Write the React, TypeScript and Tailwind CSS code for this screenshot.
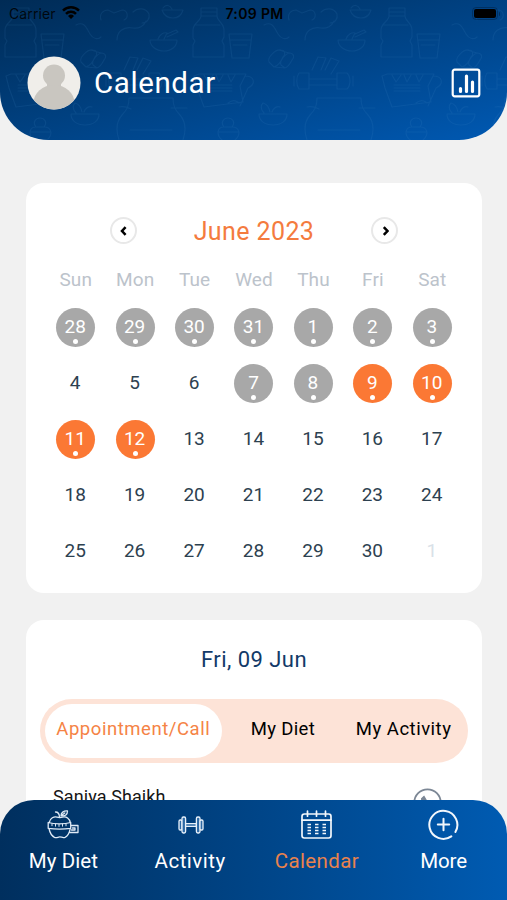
import React from "react";
import clsx from "clsx";

const weekdays = ["Sun", "Mon", "Tue", "Wed", "Thu", "Fri", "Sat"];

type Kind = "past" | "active" | "plain" | "outside";
type Day = { label: number; kind: Kind };

const days: Day[] = [
  ...[28, 29, 30, 31, 1, 2, 3].map((label): Day => ({ label, kind: "past" })),
  ...[4, 5, 6].map((label): Day => ({ label, kind: "plain" })),
  ...[7, 8].map((label): Day => ({ label, kind: "past" })),
  ...[9, 10, 11, 12].map((label): Day => ({ label, kind: "active" })),
  ...Array.from({ length: 18 }, (_, i): Day => ({ label: i + 13, kind: "plain" })),
  { label: 1, kind: "outside" },
];

function FoodPattern() {
  return (
    <svg className="absolute inset-0" width="507" height="140" fill="none" stroke="#4d93cf" strokeOpacity="0.12" strokeWidth="1.2" strokeLinejoin="round" strokeLinecap="round">
      <defs>
        <g id="food-tile">
          <path d="M13 8h16v8H13zM14 12h14M13 16c0 5-8 7-8 14v8l2 3-2 4v12h31V45l-2-4 2-4v-7c0-7-7-9-7-14M8 25h24" />
          <path d="M41 34h23l-3 24H44zM42 40h21M45 45h14" />
          <path d="M150 40h27c0 6-5 11-13 11s-14-5-14-11zM158 39c2-5 6-7 9-6l-3 6M167 34l9-4 2 2-11 5" />
          <path d="M163 8c3-4 7-3 9 1M162 10h21c-2 7-6 8-10 8s-9-2-11-8" />
          <path d="M81 62c-2-4 6-13 12-12 4 0 5 4 2 7-2 5-6 9-9 10zM93 65c-2-4 5-12 9-12 5 1 4 5 2 7-2 4-4 7-7 8zM91 50l10 3M86 67l11 1" />
          <path d="M124 70l6-13 8 1-5 12M137 70l6-12 8 3-8 13" />
          <path d="M111 73h10v16h-10c-3-4-3-12 0-16zM121 79h28v6h-28M149 73h10c4 4 4 12 0 16h-10zM106 76v10M165 76v10" />
          <path d="M6 76l5-2h47l-6 12 3 16-39 5-7-19zM16 75l4 7 5-7M28 75l3 7 4-7M40 75l3 7 4-7M18 85h26M18 88h26M18 91h26M57 76c10 0 11 8 3 12l-8 18M40 103c5-4 9-2 11 0" />
          <path d="M71 114h28c0 7-6 11-14 11s-14-4-14-11zM76 113c-4-4-3-8-1-10 4 1 6 4 7 9M84 112c1-4 5-6 8-5" />
          <path d="M129 98h44c0 8 2 12 7 17 6 7 6 16 3 25M129 98c0 8-2 12-7 17-6 7-6 16-3 25M119 107c4-1 8 0 12 2M171 108h16M130 130h42" />
          <path d="M34 140c-6-5-5-13 2-13-4-5 0-9 4-9s8 4 4 9c8 0 9 8 3 13M37 127h8M31 132h20" />
          <path d="M101 20c-2-6 2-10 7-10l6 3 8-3c6 0 7 8 2 10M133 12c5-5 13-4 16 2 1 5-2 9-7 9M76 25c8-4 10 2 14 9 3 5 8 6 11 3M117 40c0-8 6-14 16-12 6 1 11-2 13-7" />
        </g>
      </defs>
      <use href="#food-tile" />
      <use href="#food-tile" x="188" />
      <use href="#food-tile" x="376" />
    </svg>
  );
}

function WifiIcon() {
  return (
    <svg className="ml-[6px] -mt-[2px]" width="18" height="13" viewBox="0 0 18 13" fill="none" stroke="#000" strokeWidth="2.5">
      <path d="M1 4.6a11.4 11.4 0 0 1 16 0" />
      <path d="M4 7.9a7 7 0 0 1 10 0" />
      <path d="M9 13 6 9.9a4.3 4.3 0 0 1 6 0z" fill="#000" stroke="none" />
    </svg>
  );
}

function Header() {
  return (
    <header className="relative h-[140px] overflow-hidden rounded-b-[48px] bg-linear-to-br from-[#002b55] to-[#0059b3]">
      <FoodPattern />
      <div className="relative grid h-7 grid-cols-3 items-center pb-px pl-[9px] pr-[7px] font-['Inter'] text-[14px] text-black">
        <div className="flex items-center tracking-[0.1px] text-black/85">
          Carrier
          <WifiIcon />
        </div>
        <div className="text-center text-[14px] font-semibold tracking-[0.35px]">7:09 PM</div>
        <div className="flex items-center justify-end">
          <span className="flex h-[13px] w-[26px] items-center justify-center rounded-[4px] border border-black/25">
            <span className="h-[9px] w-[22px] rounded-[2px] bg-black" />
          </span>
          <span className="ml-px h-1 w-[1.5px] rounded-r bg-black/30" />
        </div>
      </div>
      <div className="relative mt-[28px] flex items-center pl-[27px] pr-[26px]">
        <svg width="54" height="54" viewBox="0 0 54 54">
          <clipPath id="avatar">
            <circle cx="27" cy="27" r="26.5" />
          </clipPath>
          <circle cx="27" cy="27" r="26.5" fill="#f0eeea" />
          <g clipPath="url(#avatar)" fill="#c9c6c0">
            <circle cx="27" cy="19.5" r="11" />
            <path d="M20 26h14v8H20z" />
            <ellipse cx="27" cy="47" rx="20.5" ry="18" />
          </g>
        </svg>
        <h1 className="ml-[13px] text-[29.5px] leading-[54px] tracking-[0.6px] text-white">Calendar</h1>
        <svg className="ml-auto" width="30" height="30" viewBox="0 0 30 30" fill="none" stroke="#fff" strokeLinecap="round">
          <rect x="1.7" y="1.7" width="26.6" height="26.6" rx="2" strokeWidth="2.2" />
          <path d="M9.5 20.5v3M15.5 8v15.5M21.5 14v9.5" strokeWidth="3.2" />
        </svg>
      </div>
    </header>
  );
}

function Arrow({ direction }: { direction: "left" | "right" }) {
  return (
    <button className="flex size-[27px] items-center justify-center rounded-full border-2 border-[#e8e8e8] bg-white">
      <svg width="8" height="10" viewBox="0 0 8 10" fill="none" stroke="#000" strokeWidth="2.5">
        <path d={direction === "left" ? "M5.6 1.2 2 5 5.6 8.8" : "M2.8 1.2 6.4 5 2.8 8.8"} />
      </svg>
    </button>
  );
}

function DayCell({ label, kind }: Day) {
  const marked = kind === "past" || kind === "active";
  return (
    <div className="flex h-14 items-center justify-center">
      <div
        className={clsx(
          "relative flex size-[39px] items-center justify-center rounded-full pr-[1px] pb-[2px] text-[19px] leading-none",
          kind === "past" && "bg-[#a8a8a8] text-white",
          kind === "active" && "bg-[#fb7834] text-white",
          kind === "plain" && "text-[#2d4150]",
          kind === "outside" && "text-[#d9e1e8]",
        )}
      >
        {label}
        {marked && <span className="absolute bottom-[3px] left-[17px] size-[5px] rounded-full bg-white" />}
      </div>
    </div>
  );
}

function CalendarCard() {
  return (
    <section className="mt-[43px] h-[410px] rounded-[18px] bg-white px-5 pt-[34px]">
      <div className="flex items-center justify-between pl-[64px] pr-[64px]">
        <Arrow direction="left" />
        <h2 className="pt-[2px] text-[25px] leading-[25px] tracking-[0.4px] text-[#f47b3e]">June 2023</h2>
        <Arrow direction="right" />
      </div>
      <div className="mt-[24px] grid grid-cols-7 text-center text-[19px] leading-6 tracking-[0.1px] text-[#bcc3cb]">
        {weekdays.map((d) => (
          <span key={d}>{d}</span>
        ))}
      </div>
      <div className="mt-[7px] grid grid-cols-7">
        {days.map((d, i) => (
          <DayCell key={i} {...d} />
        ))}
      </div>
    </section>
  );
}

function AppointmentCard() {
  return (
    <section className="mt-[27px] h-[300px] rounded-t-[18px] bg-white px-[14px] pt-[27px]">
      <h3 className="text-center text-[22px] leading-[26px] tracking-[0.45px] text-[#123a68]">Fri, 09 Jun</h3>
      <div className="mt-[26px] flex h-16 items-center rounded-full bg-[#fde3d7] px-[5px] text-[18.5px] whitespace-nowrap text-black">
        <div className="flex h-[54px] w-[177px] items-center justify-center rounded-full bg-white pb-[3px] tracking-[0.55px] text-[#f58345]">Appointment/Call</div>
        <div className="w-[123px] pb-[3px] text-center tracking-[0.35px]">My Diet</div>
        <div className="w-[119px] pb-[3px] text-center tracking-[0.5px]">My Activity</div>
      </div>
      <div className="mt-[22px] flex justify-between pl-[13px] pr-[26px]">
        <span className="text-[18px] leading-6 tracking-[0.1px] text-[#161616]">Saniya Shaikh</span>
        <svg className="mt-[3px]" width="29" height="29" viewBox="0 0 29 29" fill="none" stroke="#7c8795" strokeWidth="1.8">
          <circle cx="14.5" cy="14.5" r="13.2" />
          <path d="M11 8.5 8.6 10.8c0 5.300 4 9.200 8.900 9.200l2.500-2.500-4-2.500-1.500 1.500-3-3 1.500-1.500z" fill="#7c8795" strokeWidth="1.300" />
        </svg>
      </div>
    </section>
  );
}

function AppleIcon() {
  return (
    <svg width="32" height="30" viewBox="0 0 32 30" fill="none" stroke="#dfeaf6" strokeWidth="1.3" strokeLinejoin="round" strokeLinecap="round">
      <path d="M2.2 12.5C3.2 8 7 6.3 10 7.1c2 .6 3.5.6 5.5 0 4-.9 7 1.6 7.8 5.4M2 18.5c.8 4 3 7.5 5.5 8.8 2 .9 3.5-.4 5.2-.4s3.3 1.3 5.3.4c2.5-1.2 4.3-4.5 5.1-8" />
      <path d="M1.2 12.5c6 1.800 16.500 1.800 22.500 0v5.800c-6 .8-16.500 .8-22.500 0zM23.700 15.500H31v7h-8.500M25.500 18h2.500v2h-3.500" />
      <path d="M5 13.700v2M8.500 14.200v2M12 14.400v2M15.500 14.200v2M19 13.800v2" strokeWidth="1" />
      <path d="M12.5 7.2C12.4 4 11 2 8.5 2M14 5.7c0-3 2.5-5 6.5-4.7 0 3.5-2.3 5.500-6.500 4.700zM14 5.700l3.800-2.800" />
    </svg>
  );
}

function DumbbellIcon() {
  return (
    <svg className="ml-[2px]" width="26" height="18" viewBox="0 0 26 18" fill="#2d69a5" stroke="#e8f1fa" strokeWidth="1.3">
      <rect x="1" y="4" width="3" height="10" rx="1.2" />
      <rect x="4" y="1" width="3.6" height="16" rx="1.4" />
      <path d="M7.6 7.6h10.8v2.8H7.6z" />
      <rect x="18.4" y="1" width="3.6" height="16" rx="1.4" />
      <rect x="22" y="4" width="3" height="10" rx="1.2" />
    </svg>
  );
}

function CalendarIcon() {
  return (
    <svg width="31" height="29" viewBox="0 0 31 29" fill="none" stroke="#f2f7fc" strokeWidth="1.7" strokeLinecap="round">
      <rect x="1" y="4" width="29" height="24" rx="2.4" />
      <path d="M1 10.2h29M6.5 1.2v5M15.5 1.2v5M24.5 1.2v5" />
      <path d="M6.500 14.500h3.500M14 14.500h3.500M21.500 14.500h3.500M6.500 17.500h3.500M14 17.500h3.500M21.500 17.500h3.500M6.500 20.500h3.500M14 20.500h3.500M21.500 20.500h3.500M6.500 23.500h3.500M14 23.500h3.500M21.500 23.500h3.500" strokeLinecap="butt" />
    </svg>
  );
}

function MoreIcon() {
  return (
    <svg width="31" height="31" viewBox="0 0 31 31" fill="none" stroke="#f2f7fc" strokeWidth="2" strokeLinecap="round">
      <path d="M23.3 27.4A14 14 0 1 1 27.4 23M15.5 9.8v11.4M9.8 15.5h11.4" />
    </svg>
  );
}

const tabs = [
  { label: "My Diet", icon: <AppleIcon />, text: "tracking-[0.1px] text-white" },
  { label: "Activity", icon: <DumbbellIcon />, text: "tracking-[0.5px] text-white" },
  { label: "Calendar", icon: <CalendarIcon />, text: "tracking-[0.35px] text-[#e9824d]" },
  { label: "More", icon: <MoreIcon />, text: "tracking-[-0.1px] text-white" },
];

function BottomNav() {
  return (
    <nav className="absolute inset-x-0 bottom-0 grid h-[100px] grid-cols-4 rounded-t-[34px] bg-linear-to-r from-[#002f5e] to-[#005bb2]">
      {tabs.map((t) => (
        <div key={t.label} className="flex flex-col items-center pt-2">
          <span className="flex h-[33px] items-center">{t.icon}</span>
          <span className={clsx("mt-[7px] text-[20.5px] leading-[26px]", t.text)}>{t.label}</span>
        </div>
      ))}
    </nav>
  );
}

export default function App() {
  return (
    <div className="relative h-[900px] w-[507px] overflow-hidden bg-[#f1f1f1] font-['Roboto',sans-serif]">
      <Header />
      <main className="pl-[26px] pr-[25px]">
        <CalendarCard />
        <AppointmentCard />
      </main>
      <BottomNav />
    </div>
  );
}
